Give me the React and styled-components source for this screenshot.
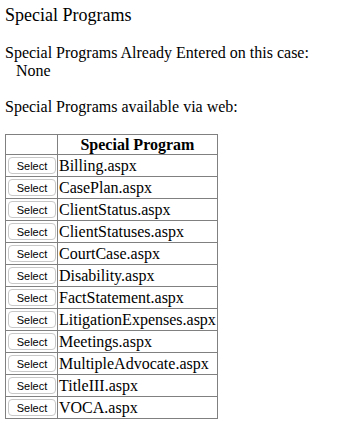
import React from "react";
import styled, { createGlobalStyle } from "styled-components";

const programs = [
  "Billing.aspx",
  "CasePlan.aspx",
  "ClientStatus.aspx",
  "ClientStatuses.aspx",
  "CourtCase.aspx",
  "Disability.aspx",
  "FactStatement.aspx",
  "LitigationExpenses.aspx",
  "Meetings.aspx",
  "MultipleAdvocate.aspx",
  "TitleIII.aspx",
  "VOCA.aspx",
];

const GlobalStyle = createGlobalStyle`
  body {
    margin: 0;
    background: #fff;
    color: #000;
    font-family: "Liberation Serif", "Times New Roman", serif;
    font-size: 16px;
  }
`;

const Page = styled.div`
  padding: 5px;
`;

const Title = styled.div`
  font-size: 18px;
  line-height: 21px;
  margin-bottom: 18px;
`;

const Line = styled.div`
  line-height: 18px;
  padding-left: ${(p) => (p.indent ? "11px" : "0")};
  margin-bottom: ${(p) => p.gap || 0}px;
`;

const Grid = styled.table`
  border-collapse: collapse;
  border: 1px solid #808080;
  margin-top: 1px;
`;

const HeadCell = styled.th`
  border: 1px solid #808080;
  height: 19px;
  padding: 0 1px;
  font-weight: bold;
  text-align: center;
  line-height: 18px;
`;

const Cell = styled.td`
  border: 1px solid #808080;
  height: 21px;
  padding: 0 1px;
  line-height: 18px;
  white-space: nowrap;
`;

const SelectButton = styled.button`
  display: block;
  width: 48px;
  height: 17px;
  margin: 0 0 0 1px;
  padding: 0;
  background: #fff;
  border: 1px solid #c8c8c8;
  border-radius: 4px;
  font-family: "Liberation Sans", Arial, sans-serif;
  font-size: 11px;
  color: #000;
`;

export default function App() {
  return (
    <Page>
      <GlobalStyle />
      <Title>Special Programs</Title>
      <Line>Special Programs Already Entered on this case:</Line>
      <Line indent gap={18}>None</Line>
      <Line gap={18}>Special Programs available via web:</Line>
      <Grid>
        <thead>
          <tr>
            <HeadCell>&nbsp;</HeadCell>
            <HeadCell>Special Program</HeadCell>
          </tr>
        </thead>
        <tbody>
          {programs.map((name) => (
            <tr key={name}>
              <Cell>
                <SelectButton type="button">Select</SelectButton>
              </Cell>
              <Cell>{name}</Cell>
            </tr>
          ))}
        </tbody>
      </Grid>
    </Page>
  );
}
